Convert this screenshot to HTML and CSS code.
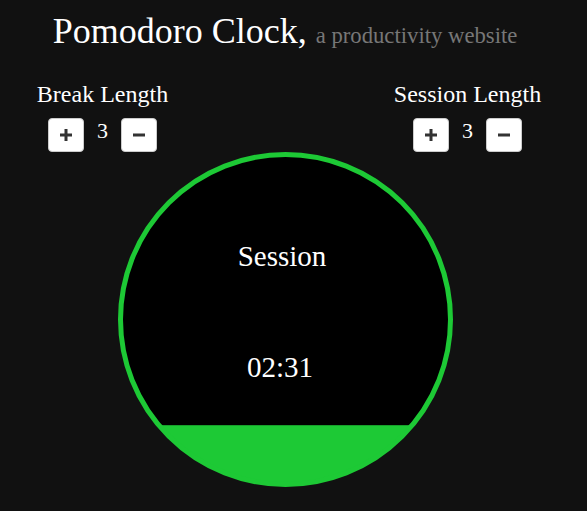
FILE: index.html
```html
<!DOCTYPE html>
<html>
<head>
<meta charset="utf-8">
<link rel="stylesheet" href="styles.css">
</head>
<body>
<div class="wrap">
  <h1 class="title">Pomodoro Clock, <small class="sub">a productivity website</small></h1>
  <div class="controls">
    <div class="ctl">
      <div class="label">Break Length</div>
      <div class="row">
        <button class="btn"><svg width="12" height="12" viewBox="0 0 12 12"><rect x="4.5" y="0" width="3" height="12" fill="#333"/><rect x="0" y="4.5" width="12" height="3" fill="#333"/></svg></button>
        <span class="num">3</span>
        <button class="btn"><svg width="12" height="12" viewBox="0 0 12 12"><rect x="0" y="4.5" width="12" height="3" fill="#333"/></svg></button>
      </div>
    </div>
    <div class="ctl">
      <div class="label">Session Length</div>
      <div class="row">
        <button class="btn"><svg width="12" height="12" viewBox="0 0 12 12"><rect x="4.5" y="0" width="3" height="12" fill="#333"/><rect x="0" y="4.5" width="12" height="3" fill="#333"/></svg></button>
        <span class="num">3</span>
        <button class="btn"><svg width="12" height="12" viewBox="0 0 12 12"><rect x="0" y="4.5" width="12" height="3" fill="#333"/></svg></button>
      </div>
    </div>
  </div>
  <div class="clock" style="--level:56px">
    <div class="mode">Session</div>
    <div class="time">02:31</div>
  </div>
</div>
</body>
</html>
```
FILE: styles.css
```css
html, body {
  margin: 0;
  padding: 0;
  background: #111111;
}
body {
  font-family: "Liberation Serif", "Times New Roman", serif;
  color: #ffffff;
  height: 511px;
  overflow: hidden;
}
.wrap {
  width: 570px;
  display: flex;
  flex-direction: column;
  align-items: center;
}
.title {
  margin: 11px 0 0;
  font-size: 36px;
  line-height: 40px;
  font-weight: normal;
  text-align: center;
  white-space: nowrap;
}
.sub {
  font-size: 22.7px;
  color: #777777;
}
.controls {
  align-self: stretch;
  display: flex;
  justify-content: space-between;
  margin-top: 24px;
}
.ctl {
  width: 205px;
  display: flex;
  flex-direction: column;
  align-items: center;
}
.label {
  font-size: 24px;
  line-height: 28px;
  white-space: nowrap;
}
.row {
  margin-top: 10px;
  display: flex;
  align-items: flex-start;
}
.btn {
  width: 36px;
  height: 34px;
  padding: 0;
  margin: 0;
  background: #ffffff;
  border: 1px solid #cccccc;
  border-radius: 4px;
  display: flex;
  align-items: center;
  justify-content: center;
}
.num {
  width: 37px;
  text-align: center;
  font-size: 22px;
  line-height: 22px;
  margin-top: 2px;
}
.clock {
  width: 325px;
  height: 325px;
  border: 5px solid #1dc935;
  border-radius: 50%;
  background: linear-gradient(to top, #1dc935 var(--level), #17a02b var(--level), #17a02b calc(var(--level) + 1px), #000000 calc(var(--level) + 1px));
  margin-left: 1px;
  display: flex;
  flex-direction: column;
  align-items: center;
}
.mode, .time {
  font-size: 29px;
  line-height: 32px;
}
.mode {
  margin-top: 83px;
  margin-right: 7px;
}
.time {
  margin-top: 79px;
  margin-right: 11px;
}
```
